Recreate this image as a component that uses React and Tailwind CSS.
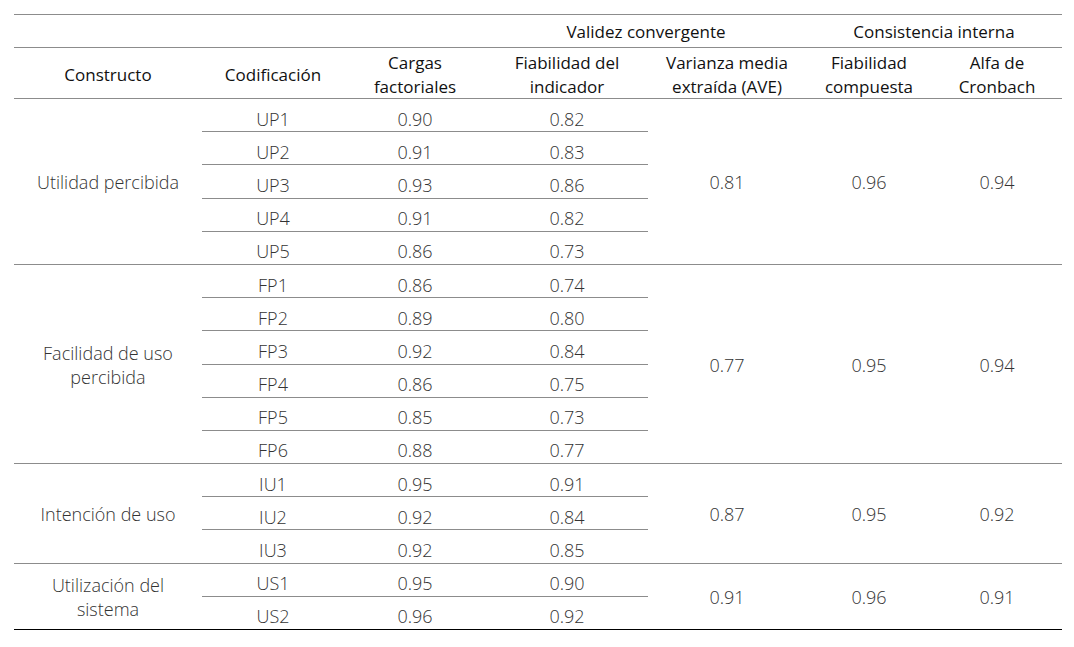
import React from 'react'

// columnas: constructo | codificación | cargas | fiabilidad ind. | AVE | fiab. compuesta | alfa
const COLS = 'grid grid-cols-[188px_142px_142px_162px_158px_126px_130px]'

const GROUPS = [
  {
    name: ['Utilidad percibida'],
    ave: '0.81', fc: '0.96', alfa: '0.94',
    items: [
      ['UP1', '0.90', '0.82'],
      ['UP2', '0.91', '0.83'],
      ['UP3', '0.93', '0.86'],
      ['UP4', '0.91', '0.82'],
      ['UP5', '0.86', '0.73'],
    ],
  },
  {
    name: ['Facilidad de uso', 'percibida'],
    ave: '0.77', fc: '0.95', alfa: '0.94',
    items: [
      ['FP1', '0.86', '0.74'],
      ['FP2', '0.89', '0.80'],
      ['FP3', '0.92', '0.84'],
      ['FP4', '0.86', '0.75'],
      ['FP5', '0.85', '0.73'],
      ['FP6', '0.88', '0.77'],
    ],
  },
  {
    name: ['Intención de uso'],
    ave: '0.87', fc: '0.95', alfa: '0.92',
    items: [
      ['IU1', '0.95', '0.91'],
      ['IU2', '0.92', '0.84'],
      ['IU3', '0.92', '0.85'],
    ],
  },
  {
    name: ['Utilización del', 'sistema'],
    ave: '0.91', fc: '0.96', alfa: '0.91',
    items: [
      ['US1', '0.95', '0.90'],
      ['US2', '0.96', '0.92'],
    ],
  },
]

const cellBase = 'flex items-center justify-center text-center'

function Group({ g, last }) {
  const n = g.items.length
  const span = { gridRow: `1 / span ${n}` }
  return (
    <div
      className={`${COLS} ${last ? 'border-b border-black' : 'border-b border-[#8c8c8c]'}`}
      style={{ gridTemplateRows: `repeat(${n - 1}, 33.2px) 32.2px` }}
    >
      <div className={`${cellBase} col-start-1 flex-col leading-[24px] pt-[1px]`} style={span}>
        {g.name.map((l) => <span key={l}>{l}</span>)}
      </div>
      {g.items.map((it, i) => {
        const line = i < n - 1 ? 'border-b border-[#8c8c8c]' : ''
        return (
          <React.Fragment key={it[0]}>
            <div className={`${cellBase} col-start-2 pt-[8px] ${line}`} style={{ gridRow: i + 1 }}>{it[0]}</div>
            <div className={`${cellBase} col-start-3 pt-[8px] ${line}`} style={{ gridRow: i + 1 }}>{it[1]}</div>
            <div className={`${cellBase} col-start-4 pt-[8px] ${line}`} style={{ gridRow: i + 1 }}>{it[2]}</div>
          </React.Fragment>
        )
      })}
      <div className={`${cellBase} col-start-5 pt-[3px]`} style={span}>{g.ave}</div>
      <div className={`${cellBase} col-start-6 pt-[3px]`} style={span}>{g.fc}</div>
      <div className={`${cellBase} col-start-7 pt-[3px]`} style={span}>{g.alfa}</div>
    </div>
  )
}

export default function App() {
  return (
    <div className="min-h-[647px] w-[1074px] bg-white pl-[14px] pt-[14px] font-['Open_Sans','Liberation_Sans',sans-serif] text-[17px]">
      <div className="w-[1048px]">
        {/* cabecera agrupada */}
        <div className={`${COLS} h-[34px] border-y border-[#8c8c8c] text-[#111] pt-[2px]`}>
          <div className="col-span-3" />
          <div className={`${cellBase} col-span-2`}>Validez convergente</div>
          <div className={`${cellBase} col-span-2`}>Consistencia interna</div>
        </div>

        {/* cabecera de columnas */}
        <div className={`${COLS} h-[51px] border-b border-[#8c8c8c] text-[#111] leading-[24px] pt-[3px]`}>
          <div className={cellBase}>Constructo</div>
          <div className={cellBase}>Codificación</div>
          <div className={`${cellBase} flex-col`}><span>Cargas</span><span>factoriales</span></div>
          <div className={`${cellBase} flex-col`}><span>Fiabilidad del</span><span>indicador</span></div>
          <div className={`${cellBase} flex-col`}><span>Varianza media</span><span>extraída (AVE)</span></div>
          <div className={`${cellBase} flex-col`}><span>Fiabilidad</span><span>compuesta</span></div>
          <div className={`${cellBase} flex-col`}><span>Alfa de</span><span>Cronbach</span></div>
        </div>

        {/* cuerpo */}
        <div className="font-light text-[18px] text-[#333]">
          {GROUPS.map((g, i) => (
            <Group key={g.name[0]} g={g} last={i === GROUPS.length - 1} />
          ))}
        </div>
      </div>
    </div>
  )
}
